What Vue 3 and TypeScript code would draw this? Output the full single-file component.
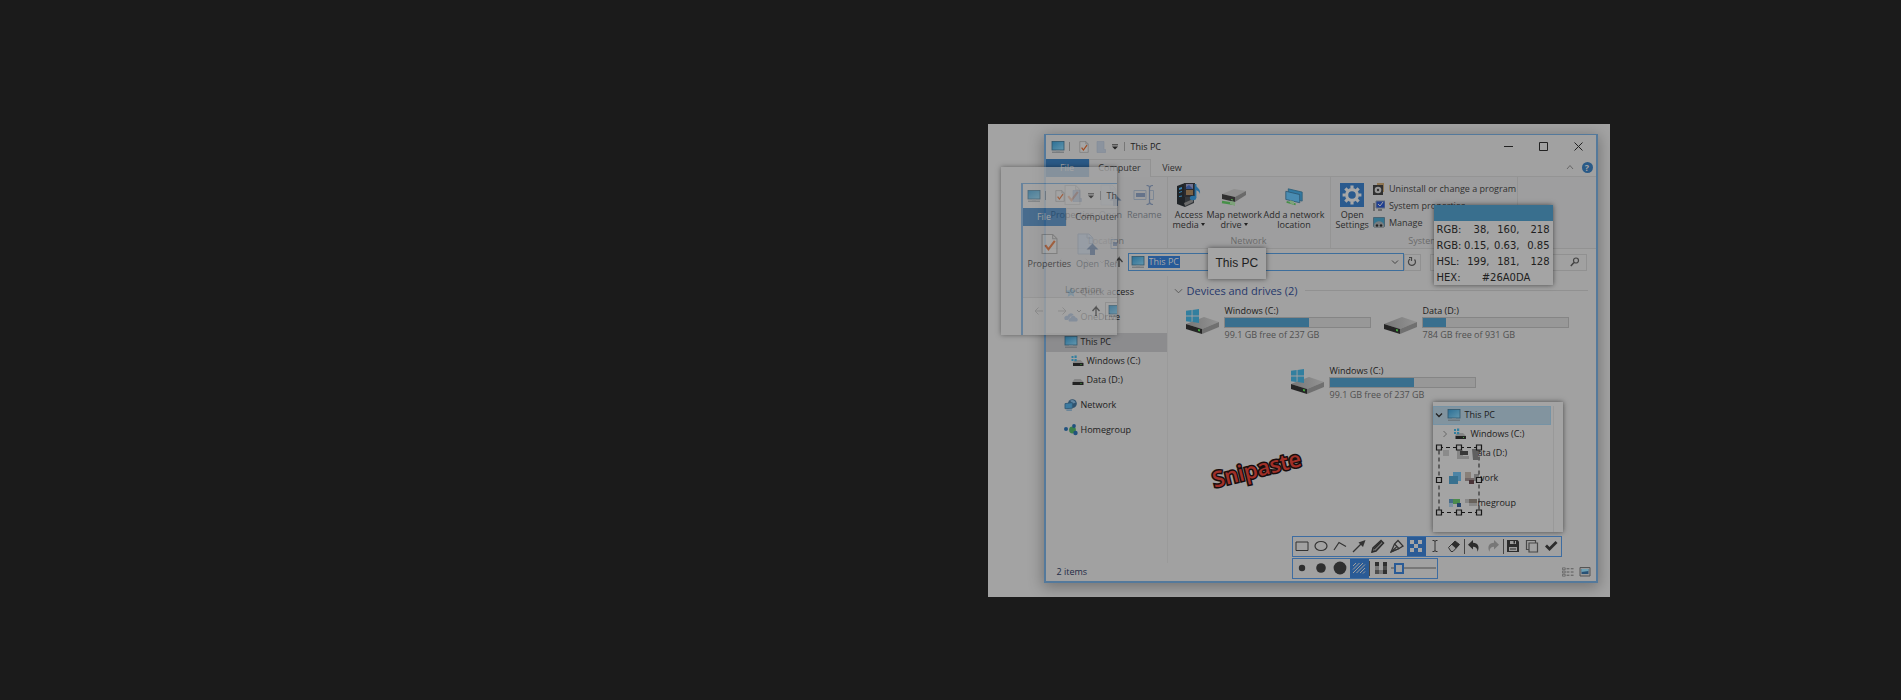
<script setup lang="ts">
import { ref } from 'vue'

interface Drive { name: string; free: string; used: number; icon: string }
interface Tool { label: string; icon: string; active?: boolean; dim?: boolean }

const cDrive: Drive = { name: 'Windows (C:)', free: '99.1 GB free of 237 GB', used: 58, icon: 'i-windrive' }
const drives: Drive[] = [
  cDrive,
  { name: 'Data (D:)', free: '784 GB free of 931 GB', used: 16, icon: 'i-drive' },
]

const places = [
  { name: 'Quick access', icon: 'i-star', gap: true },
  { name: 'OneDrive', icon: 'i-cloud', gap: true },
  { name: 'This PC', icon: 'i-pc', gap: true, current: true },
  { name: 'Windows (C:)', icon: 'i-swin', child: true },
  { name: 'Data (D:)', icon: 'i-sdrive', child: true },
  { name: 'Network', icon: 'i-net', gap: true },
  { name: 'Homegroup', icon: 'i-home', gap: true },
]

const systemTools = [
  { name: 'Uninstall or change a program', icon: 'i-disc' },
  { name: 'System properties', icon: 'i-sys' },
  { name: 'Manage', icon: 'i-manage' },
]

const drawTools: Tool[][] = [
  [
    { label: 'Rectangle', icon: 't-rect' },
    { label: 'Ellipse', icon: 't-ellipse' },
    { label: 'Polyline', icon: 't-poly' },
    { label: 'Arrow', icon: 't-arrow' },
    { label: 'Pencil', icon: 't-pencil' },
    { label: 'Marker', icon: 't-marker' },
    { label: 'Mosaic', icon: 't-mosaic', active: true },
    { label: 'Text', icon: 't-text' },
    { label: 'Eraser', icon: 't-eraser' },
  ],
  [
    { label: 'Undo', icon: 't-undo' },
    { label: 'Redo', icon: 't-redo', dim: true },
  ],
  [
    { label: 'Save', icon: 't-save' },
    { label: 'Copy', icon: 't-copy' },
    { label: 'Done', icon: 't-check' },
  ],
]

const sizeTools: Tool[] = [
  { label: 'Small', icon: 't-dot1' },
  { label: 'Medium', icon: 't-dot2' },
  { label: 'Large', icon: 't-dot3' },
  { label: 'Area', icon: 't-hatch', active: true },
]

const colorRows = [
  ['RGB:', '38,', '160,', '218'],
  ['RGB:', '0.15,', '0.63,', '0.85'],
  ['HSL:', '199,', '181,', '128'],
]

const address = ref('This PC')
const query = ref('')
const strength = ref(12)
</script>

<template>
  <svg class="sheet" aria-hidden="true">
    <defs>
      <linearGradient id="g-screen" x1="0" y1="0" x2="1" y2="1">
        <stop offset="0" stop-color="#2b6f95" /><stop offset="1" stop-color="#6397ae" />
      </linearGradient>
      <linearGradient id="g-top" x1="0" y1="0" x2="1" y2="0">
        <stop offset="0" stop-color="#777" /><stop offset="1" stop-color="#939393" />
      </linearGradient>
    </defs>
    <symbol id="i-pc" viewBox="0 0 14 12">
      <rect x="1" y="0.5" width="12" height="8.5" fill="url(#g-screen)" stroke="#30566b" stroke-width="0.8" />
      <path d="M5 9.4h4v1H5z" fill="#808a90" /><path d="M1 11.2h12" stroke="#62686d" stroke-width="0.9" />
    </symbol>
    <symbol id="i-check" viewBox="0 0 16 20">
      <path d="M1 1h10l4 4v14H1z" fill="#a5a5a5" stroke="#747474" /><path d="M11 1v4h4" fill="none" stroke="#747474" />
      <path d="M4 11l3 4 6-8" fill="none" stroke="#a04a1f" stroke-width="2" />
    </symbol>
    <symbol id="i-doc" viewBox="0 0 10 12"><path d="M1 .5h7v8h1.500v3H1z" fill="#8b939e" stroke="#828a99" stroke-width=".6" /></symbol>
    <symbol id="i-open" viewBox="0 0 22 22">
      <path d="M1 1h11l4 4v16H1z" fill="#959da7" stroke="#858d98" /><path d="M10 1v4h6" fill="none" stroke="#858d98" />
      <path d="M15.500 10.500l-6 6h3.500v5.500h5v-5.500h3.500z" fill="#596a82" />
    </symbol>
    <symbol id="i-rename" viewBox="0 0 22 20">
      <path d="M1 5.500h12v9H1zM16.500 5.500h4v9h-4" fill="none" stroke="#7c8795" /><path d="M3 8h9v4H3z" fill="#65738a" />
      <path d="M13.500.5c2 0 3 .5 3 2v15c0 1.500-1 2-3 2M20 .5c-2 0-3 .5-3 2M20 19.500c-2 0-3-.5-3-2" fill="none" stroke="#65738a" stroke-width="1.200" />
    </symbol>
    <symbol id="i-media" viewBox="0 0 26 24">
      <path d="M1 3l8-3v24l-8-3z" fill="#202428" /><path d="M9 5l9 1v14l-9 4z" fill="#34383c" />
      <path d="M3 5l3-1v2l-3 1zM3 9l3-1v1l-3 1zM3 13l3-.5v1l-3 .5z" fill="#3881b0" />
      <path d="M8 0h11v14H8z" fill="#292b30" /><path d="M10 1h7v5h-7z" fill="#6f7290" /><path d="M10 7h7v5h-7z" fill="#7b6244" />
      <path d="M10 4l3-2 4 4h-7z" fill="#354f87" /><path d="M8 20l9-4v3l-8 4z" fill="#6c6c6c" />
      <path d="M19.500 1v14" stroke="#296f9f" stroke-width="1.800" /><ellipse cx="17" cy="15" rx="3.200" ry="2.200" fill="#296f9f" />
      <path d="M19 1c1 4 6 4 5 10-1-3-3-4-5-4z" fill="#296f9f" />
    </symbol>
    <symbol id="i-mapnet" viewBox="0 0 26 18">
      <path d="M1 6l12-5 12 2-11 6z" fill="#8f8f8f" /><path d="M1 6l13 3v5L1 11z" fill="#303030" /><path d="M14 9l11-6v4l-11 7z" fill="#6a6a6a" />
      <path d="M10 11l2 .5v1l-2-.5z" fill="#52a94a" /><path d="M1 14l13 2" stroke="#479048" stroke-width="2.400" /><path d="M9 13l5 1v4l-5-2z" fill="#7fa37b" />
    </symbol>
    <symbol id="i-addnet" viewBox="0 0 24 22">
      <path d="M5 1l17 4v11L5 12z" fill="#327aa3" stroke="#2f5d74" /><path d="M2 4l17 4v10L2 14z" fill="#4a8cb2" stroke="#2c566f" />
      <path d="M3 17l11 3" stroke="#479048" stroke-width="2.400" /><path d="M7 15l5 1.500v4l-5-2z" fill="#7fa37b" />
    </symbol>
    <symbol id="i-gear" viewBox="0 0 26 26">
      <path d="M0 0h26v26H0z" fill="#2a5a8e" /><circle cx="13" cy="13" r="5.800" fill="none" stroke="#a7a7a7" stroke-width="3.400" />
      <path d="M13 2.800v3.400M13 19.800v3.400M2.800 13h3.400M19.800 13h3.400M5.800 5.800l2.400 2.400M17.800 17.800l2.400 2.400M5.800 20.200l2.400-2.400M17.800 8.200l2.400-2.400" stroke="#a7a7a7" stroke-width="3.400" />
    </symbol>
    <symbol id="i-disc" viewBox="0 0 12 12">
      <path d="M4 0h7v9H4z" fill="#8f7652" /><path d="M0 2h10v10H0z" fill="#303030" /><circle cx="5" cy="7" r="3.300" fill="#989898" /><circle cx="5" cy="7" r="1.200" fill="#333" />
    </symbol>
    <symbol id="i-sys" viewBox="0 0 12 12">
      <path d="M3 1h9v7H3z" fill="#203f91" stroke="#656f7d" /><path d="M5 4l2 2 3-4" fill="none" stroke="#a5a5a5" /><path d="M0 3h2v8H0zM5 9h4v2H5z" fill="#6b6b6b" />
    </symbol>
    <symbol id="i-manage" viewBox="0 0 12 12">
      <path d="M.5.5h11v9H.5z" fill="#347590" stroke="#4a6473" /><path d="M1 8c1-5 9-5 10 0v3H1z" fill="#777c7e" /><circle cx="4" cy="8.500" r="1.200" fill="#222" /><circle cx="8" cy="8.500" r="1.200" fill="#222" />
    </symbol>
    <symbol id="i-drive" viewBox="0 0 33 26">
      <path d="M0 15l18-7 15 5-17 7z" fill="url(#g-top)" /><path d="M16 20l17-7v5l-17 7z" fill="#707070" /><path d="M0 15l16 5v5L0 20z" fill="#252525" /><path d="M12 20l2 .6v2l-2-.6z" fill="#43a43d" />
    </symbol>
    <symbol id="i-windrive" viewBox="0 0 33 26">
      <path d="M0 15l18-7 15 5-17 7z" fill="url(#g-top)" /><path d="M16 20l17-7v5l-17 7z" fill="#707070" /><path d="M0 15l16 5v5L0 20z" fill="#252525" /><path d="M12 20l2 .6v2l-2-.6z" fill="#43a43d" />
      <path d="M0 1.800L5.600 1v5.600H0zM6.500.9L13 0v6.600H6.500zM0 7.500h5.600V13L0 12.200zM6.500 7.500H13V14l-6.500-.9z" fill="#327f9f" />
    </symbol>
    <symbol id="i-sdrive" viewBox="0 0 12 12"><path d="M3 5h6l3 3H1z" fill="#858585" /><path d="M1 8h11v3H1z" fill="#222" /><path d="M9 9h1v1H9z" fill="#45a641" /></symbol>
    <symbol id="i-swin" viewBox="0 0 12 12">
      <path d="M3 5h6l3 3H1z" fill="#858585" /><path d="M1.500 8H12v3H1.500z" fill="#222" /><path d="M9 9h1v1H9z" fill="#45a641" /><path d="M0 1h2v2H0zM3 .5h2.200V3H3zM0 4h2v2H0zM3 4h2.200v2.200H3z" fill="#327f9f" />
    </symbol>
    <symbol id="i-star" viewBox="0 0 12 12"><path d="M6 1l1.600 3.300 3.600.4-2.700 2.500.8 3.600L6 9l-3.300 1.800.8-3.600L.8 4.700l3.600-.4z" fill="#28729f" /></symbol>
    <symbol id="i-cloud" viewBox="0 0 14 12"><path d="M1 9c-2-3 1-5 2.500-4C5 1 9 2 9.500 4l-3 1.500L4 9z" fill="#264d83" /><path d="M5 10.500c-1-2 0-3.500 1.500-3.500C7 4 11 4 11.500 6.500 14 6.500 14.500 10 12.500 10.500z" fill="#264d83" /></symbol>
    <symbol id="i-net" viewBox="0 0 14 13"><circle cx="8.500" cy="5" r="4.800" fill="#30536f" /><path d="M6 2c2-2 5-1 6 2l-3 1z" fill="#6185a0" /><path d="M.5 5l8-1v6l-8 .5z" fill="#3d7ba0" stroke="#325c7a" /><path d="M2 12h6" stroke="#386d92" /></symbol>
    <symbol id="i-home" viewBox="0 0 14 12"><circle cx="8.500" cy="6" r="3.400" fill="#3a7f49" /><circle cx="2" cy="5" r="2" fill="#20517f" /><circle cx="10" cy="2" r="1.900" fill="#20517f" /><circle cx="11.500" cy="9" r="2.200" fill="#20517f" /></symbol>

    <symbol id="t-rect" viewBox="0 0 14 14"><path d="M1 3h12v8.500H1z" fill="none" stroke="#333" /></symbol>
    <symbol id="t-ellipse" viewBox="0 0 14 14"><ellipse cx="7" cy="7" rx="6" ry="4.500" fill="none" stroke="#333" stroke-width="1.200" /></symbol>
    <symbol id="t-poly" viewBox="0 0 14 14"><path d="M1 11l5-7.500 7 4" fill="none" stroke="#333" stroke-width="1.200" /></symbol>
    <symbol id="t-arrow" viewBox="0 0 14 14"><path d="M1 13L9 5" stroke="#333" stroke-width="1.300" /><path d="M13.500 1L11 8 6.500 3.500z" fill="#333" /></symbol>
    <symbol id="t-pencil" viewBox="0 0 14 14"><path d="M1 13l1-4L10 1.500l2.500 2.500L5 12z" fill="#777" stroke="#2c2c2c" stroke-width="1.500" /><path d="M3 10l7-7M1 13l3-1" stroke="#2c2c2c" stroke-width="1.300" /></symbol>
    <symbol id="t-marker" viewBox="0 0 14 14"><path d="M1 13L4.500 5 8 1.500l5 5.500-4 2.500z" fill="none" stroke="#333" stroke-width="1.300" /><path d="M4.500 5L9 9.500 1 13l5.500-5" fill="none" stroke="#333" stroke-width="1.200" /></symbol>
    <symbol id="t-mosaic" viewBox="0 0 14 14"><path d="M1 1h4v4H1zM9 1h4v4H9zM5 5h4v4H5zM1 9h4v4H1zM9 9h4v4H9z" fill="#a5a5a5" /></symbol>
    <symbol id="t-text" viewBox="0 0 14 14"><path d="M4.500 1.500H6l1 .8 1-.8h1.500M7 2v10M4.500 12.500H6l1-.8 1 .8h1.500" fill="none" stroke="#333" /></symbol>
    <symbol id="t-eraser" viewBox="0 0 14 14"><path d="M1.500 8.500L8 2l4.500 3.500-6.500 7H4z" fill="#9b9b9b" stroke="#333" /><path d="M8 2l4.500 3.500-3.500 4L4.500 5.500z" fill="#2c2c2c" /></symbol>
    <symbol id="t-undo" viewBox="0 0 14 14"><path d="M6 1v2.700c5 0 7 4 4.500 9 0-3.500-1.500-5-4.500-5v2.800L1 5.700z" fill="#2c2c2c" /></symbol>
    <symbol id="t-redo" viewBox="0 0 14 14"><path d="M8 1v2.700c-5 0-7 4-4.500 9 0-3.500 1.500-5 4.500-5v2.800l5-4.800z" fill="#777" /></symbol>
    <symbol id="t-save" viewBox="0 0 14 14"><path d="M1 1h10.500L13 2.500V13H1z" fill="#2c2c2c" /><path d="M4 2h6v3H4zM3 8h8v4H3z" fill="#9d9d9d" /><path d="M7.500 2H9v2.500H7.500zM4 9.500h6v1H4z" fill="#2c2c2c" /></symbol>
    <symbol id="t-copy" viewBox="0 0 14 14"><path d="M4 4h8.500v9H4zM10.500 4V1.500h-9v9H4" fill="none" stroke="#484848" stroke-width="1.200" /></symbol>
    <symbol id="t-check" viewBox="0 0 14 14"><path d="M1 7.500l2-2L5.500 8 11.500 2l2 2-8 8z" fill="#2c2c2c" /></symbol>
    <symbol id="t-dot1" viewBox="0 0 14 14"><circle cx="7" cy="7" r="3.200" fill="#2f2f2f" /></symbol>
    <symbol id="t-dot2" viewBox="0 0 14 14"><circle cx="7" cy="7" r="4.800" fill="#2f2f2f" /></symbol>
    <symbol id="t-dot3" viewBox="0 0 14 14"><circle cx="7" cy="7" r="6.400" fill="#2f2f2f" /></symbol>
    <symbol id="t-hatch" viewBox="0 0 14 14"><path d="M1 5l3-3M1 8.500L7.500 2M1 12L11 2M4.500 12L13 3.500M8 12l5-5M11 12.500l2-2" stroke="#a0a0a0" /></symbol>
    <symbol id="t-blocks" viewBox="0 0 12 12"><path d="M0 0h4v4H0zM8 0h4v4H8zM8 8h4v4H8z" fill="#303030" /><path d="M0 4h4v4H0zM4 8h4v4H4z" fill="#777" /><path d="M8 4h4v4H8zM0 8h4v4H0z" fill="#4d4d4d" /></symbol>
  </svg>

  <main class="page">
    <section class="hero">
      <div class="stage">
        <div class="window">
          <header class="title">
            <svg class="ic pc"><use href="#i-pc" /></svg><i class="tick"></i>
            <svg class="ic chk"><use href="#i-check" /></svg>
            <svg class="ic doc"><use href="#i-doc" /></svg>
            <svg class="ic qat" viewBox="0 0 6 6"><path d="M0 .8h6" stroke="#333" /><path d="M0 2.500h6L3 5.500z" fill="#222" /></svg>
            <i class="tick"></i><span class="name">This PC</span>
            <div class="caption">
              <button aria-label="Minimize"><svg viewBox="0 0 9 9"><path d="M0 4.500h9" /></svg></button>
              <button aria-label="Maximize"><svg viewBox="0 0 9 9"><path d="M.5.5h8v8h-8z" /></svg></button>
              <button aria-label="Close"><svg viewBox="0 0 9 9"><path d="M.5.5l8 8M8.500.5l-8 8" /></svg></button>
            </div>
          </header>

          <nav class="tabs">
            <button class="file">File</button><button class="on">Computer</button><button>View</button>
            <span class="help">
              <svg class="fold" viewBox="0 0 8 6"><path d="M1 5l3-3.500L7 5" fill="none" stroke="#666" /></svg>
              <button class="q" aria-label="Help">?</button>
            </span>
          </nav>

          <div class="ribbon">
            <div class="group loc">
              <div class="tools">
                <button class="tool"><svg class="big k"><use href="#i-check" /></svg><span>Properties</span></button>
                <button class="tool off op"><svg class="big"><use href="#i-open" /></svg><span>Open</span></button>
                <button class="tool off"><svg class="big"><use href="#i-rename" /></svg><span>Rename</span></button>
              </div>
              <p>Location</p>
            </div>
            <div class="group net">
              <div class="tools">
                <button class="tool"><svg class="big"><use href="#i-media" /></svg><span>Access<br />media <b class="dn"></b></span></button>
                <button class="tool"><svg class="big m"><use href="#i-mapnet" /></svg><span>Map network<br />drive <b class="dn"></b></span></button>
                <button class="tool"><svg class="big m"><use href="#i-addnet" /></svg><span>Add a network<br />location</span></button>
              </div>
              <p>Network</p>
            </div>
            <div class="group sys">
              <div class="tools">
                <button class="tool set"><svg class="big"><use href="#i-gear" /></svg><span>Open<br />Settings</span></button>
                <div class="list">
                  <button v-for="s in systemTools" :key="s.name"><svg><use :href="'#' + s.icon" /></svg>{{ s.name }}</button>
                </div>
              </div>
              <p>System</p>
            </div>
          </div>

          <div class="bar">
            <div class="arrows">
              <svg viewBox="0 0 66 12"><path d="M9 6H1l3.500-3.500M1 6l3.500 3.500M24 6h8l-3.500-3.500M32 6l-3.500 3.500" stroke="#858585" /><path d="M43 5l2 2 2-2" stroke="#777" /><path d="M62 11V2l-3.500 4M62 2l3.500 4" stroke="#3b3b3b" stroke-width="1.300" /></svg>
            </div>
            <label class="addr"><svg class="ic pc"><use href="#i-pc" /></svg><input v-model="address" aria-label="Address" />
              <svg class="drop" viewBox="0 0 8 6"><path d="M1 1.500l3 3 3-3" fill="none" stroke="#444" /></svg></label>
            <button class="reload" aria-label="Refresh"><svg viewBox="0 0 10 10"><path d="M7.500 2.500A3.500 3.500 0 1 1 3 2M2 .5h2.500V4" fill="none" stroke="#444" stroke-width="1.200" /></svg></button>
            <label class="find"><input v-model="query" aria-label="Search This PC" /><svg viewBox="0 0 10 10"><circle cx="6" cy="3.500" r="2.500" fill="none" stroke="#444" stroke-width="1.200" /><path d="M4 5.500L.8 9" stroke="#444" stroke-width="1.500" /></svg></label>
          </div>

          <div class="body">
            <aside class="side">
              <a v-for="p in places" :key="p.name" href="#" :class="{ gap: p.gap, child: p.child, current: p.current }">
                <svg><use :href="'#' + p.icon" /></svg>{{ p.name }}
              </a>
            </aside>
            <div class="pane">
              <h2><svg viewBox="0 0 10 6"><path d="M1 1l4 4 4-4" fill="none" stroke="#555" /></svg>Devices and drives (2)</h2>
              <div class="drives">
                <div v-for="d in drives" :key="d.name" class="drive">
                  <svg><use :href="'#' + d.icon" /></svg>
                  <div class="info"><span>{{ d.name }}</span><div class="meter"><i :style="{ width: d.used + '%' }"></i></div><small>{{ d.free }}</small></div>
                </div>
              </div>
            </div>
          </div>

          <footer class="status">2 items
            <span class="views">
              <svg viewBox="0 0 13 10"><path d="M.5.5h3v2h-3zM.5 4h3v2h-3zM.5 7.500h3v2h-3z" fill="none" stroke="#555" stroke-width=".7" /><path d="M5 1.500h3M9.500 1.500h3M5 5h3M9.500 5h3M5 8.500h3M9.500 8.500h3" stroke="#555" /></svg>
              <svg viewBox="0 0 11 10"><path d="M.5.5h10v8.500H.5z" fill="#999" stroke="#555" /><path d="M2 2h7v5H2z" fill="#285276" /><path d="M2 2h7v2L2 5z" fill="#6da0b3" /></svg>
            </span>
          </footer>
        </div>

        <div class="drive copy">
          <svg><use :href="'#' + cDrive.icon" /></svg>
          <div class="info"><span>{{ cDrive.name }}</span><div class="meter"><i :style="{ width: cDrive.used + '%' }"></i></div><small>{{ cDrive.free }}</small></div>
        </div>

        <div class="snip ghost">
          <div class="part">
            <div class="title">
              <svg class="ic pc"><use href="#i-pc" /></svg><i class="tick"></i>
              <svg class="ic chk"><use href="#i-check" /></svg>
              <svg class="ic doc"><use href="#i-doc" /></svg>
              <svg class="ic qat" viewBox="0 0 6 6"><path d="M0 .8h6" stroke="#333" /><path d="M0 2.500h6L3 5.500z" fill="#222" /></svg>
              <i class="tick"></i><span class="name">This PC</span>
            </div>
            <div class="tabs"><button class="file">File</button><button class="on">Computer</button></div>
            <div class="ribbon">
              <div class="group loc">
                <div class="tools">
                  <button class="tool"><svg class="big k"><use href="#i-check" /></svg><span>Properties</span></button>
                  <button class="tool off op"><svg class="big"><use href="#i-open" /></svg><span>Open</span></button>
                  <button class="tool off"><svg class="big"><use href="#i-rename" /></svg><span>Rename</span></button>
                </div>
                <p>Location</p>
              </div>
            </div>
            <div class="bar">
              <div class="arrows">
                <svg viewBox="0 0 66 12"><path d="M9 6H1l3.500-3.500M1 6l3.500 3.500M24 6h8l-3.500-3.500M32 6l-3.500 3.500" stroke="#858585" /><path d="M43 5l2 2 2-2" stroke="#777" /><path d="M62 11V2l-3.500 4M62 2l3.500 4" stroke="#3b3b3b" stroke-width="1.300" /></svg>
              </div>
              <div class="addr plain"><svg class="ic pc"><use href="#i-pc" /></svg></div>
            </div>
          </div>
        </div>

        <div class="snip tip">This PC</div>

        <div class="snip color">
          <div class="swatch"></div>
          <table>
            <tbody>
              <tr v-for="(r, i) in colorRows" :key="i"><th scope="row">{{ r[0] }}</th><td>{{ r[1] }}</td><td>{{ r[2] }}</td><td>{{ r[3] }}</td></tr>
              <tr><th scope="row">HEX:</th><td colspan="3" class="hex">#26A0DA</td></tr>
            </tbody>
          </table>
        </div>

        <div class="snip tree">
          <div class="inner">
            <a href="#" class="sel"><svg class="ar" viewBox="0 0 8 8"><path d="M1 2.500l3 3 3-3" stroke="#222" stroke-width="1.300" /></svg><svg><use href="#i-pc" /></svg>This PC</a>
            <a href="#" class="child"><svg class="ar" viewBox="0 0 8 8"><path d="M2.500 1l3 3-3 3" stroke="#666" /></svg><svg><use href="#i-swin" /></svg>Windows (C:)</a>
            <a href="#" class="cut">ata (D:)</a>
            <a href="#" class="cut gap">work</a>
            <a href="#" class="cut gap">megroup</a>
          </div>
          <svg class="marquee" viewBox="0 0 48 72">
            <path d="M8 6h6v6H8z" fill="#8b8b8b" /><path d="M22 6h6v6h-6zM28 12h6v3h-12v-3z" fill="#858585" /><path d="M25 7h8v4h-8z" fill="#383838" /><path d="M37 5h6v11h-5z" fill="#606060" />
            <path d="M18 28h8v9h-8z" fill="#4d84a5" /><path d="M14 32h9v8h-9z" fill="#39718f" /><path d="M30 28h6v6h-6z" fill="#888079" /><path d="M30 34h12v3H30z" fill="#706666" /><path d="M34 36h5v4h-5z" fill="#493337" /><path d="M39 30h5v7h-5z" fill="#777" />
            <path d="M14 55h4v4h-4z" fill="#466b88" /><path d="M18 55h7v5h-7z" fill="#4c8b4d" /><path d="M22 59h4v4h-4z" fill="#25436b" /><path d="M14 59h4v4h-4z" fill="#7b92a4" /><path d="M30 55h6v4h-6zM34 59h8v3h-8z" fill="#888" /><path d="M34 55h8v4h-8z" fill="#68625c" />
            <path d="M4 3.500h40v65H4z" fill="none" stroke="#181818" stroke-dasharray="4 3" />
            <path d="M1.500 1h5v5h-5zM21.500 1h5v5h-5zM41.500 1h5v5h-5zM1.500 33.500h5v5h-5zM41.500 33.500h5v5h-5zM1.500 66h5v5h-5zM21.500 66h5v5h-5zM41.500 66h5v5h-5z" fill="#a0a0a0" stroke="#181818" stroke-width="1.200" />
          </svg>
        </div>

        <div class="toolbar main">
          <div v-for="(g, i) in drawTools" :key="i" class="set">
            <button v-for="t in g" :key="t.label" :aria-label="t.label" :class="{ active: t.active }" :disabled="t.dim"><svg><use :href="'#' + t.icon" /></svg></button>
          </div>
        </div>
        <div class="toolbar sub">
          <div class="set">
            <button v-for="t in sizeTools" :key="t.label" :aria-label="t.label" :class="{ active: t.active }"><svg><use :href="'#' + t.icon" /></svg></button>
          </div>
          <div class="set"><svg class="blocks"><use href="#t-blocks" /></svg><input v-model="strength" type="range" aria-label="Mosaic strength" /></div>
        </div>

        <div class="brand">Snipaste</div>
      </div>
    </section>
  </main>
</template>

<style>
body { margin: 0; background: #1b1b1b; }
</style>

<style scoped>
* { box-sizing: border-box; }
button, input { font: inherit; color: inherit; background: none; border: 0; padding: 0; margin: 0; }
a { color: inherit; text-decoration: none; }
svg { display: block; flex: none; }
.sheet { position: absolute; width: 0; height: 0; }
.page { min-height: 100vh; padding-top: 20px; display: grid; align-items: center; color: #202020; font: 9px/10px "Open Sans", "Noto Sans", sans-serif; }
.hero { width: 100%; max-width: 1318px; margin: 0 auto; display: flex; justify-content: flex-end; }
.stage { position: relative; width: 100%; max-width: 622px; padding: 10px 12px 14px 56px; background: #a3a3a3; overflow: hidden; }
.window { display: flex; flex-direction: column; background: #a1a1a1; border: 2px solid #54799b; border-top-width: 1px; box-shadow: 0 3px 14px 1px rgba(0, 0, 0, .3); }

.title { display: flex; align-items: center; height: 24px; padding-left: 5px; white-space: nowrap; }
.ic { width: 14px; height: 12px; }
.tick { width: 1px; height: 9px; background: #777; margin: 0 9px 0 4px; }
.chk { width: 10px; height: 12px; margin-right: 7px; }
.doc { width: 10px; height: 12px; margin-right: 6px; }
.qat { width: 6px; height: 6px; margin-right: 2px; }
.qat + .tick { margin-right: 6px; }
.caption { margin-left: auto; display: flex; }
.caption button { width: 35px; height: 22px; display: grid; place-items: center; }
.caption svg { width: 9px; height: 9px; fill: none; stroke: #222; }

.tabs { display: flex; height: 18px; border-bottom: 1px solid #949494; }
.tabs button { width: 43px; height: 18px; color: #303030; }
.tabs .file { width: 43px; background: #2a5a87; color: #a5a5a5; }
.tabs .on { width: 62px; background: #9f9fa0; border: 1px solid #929292; border-width: 1px 1px 0; }
.help { margin-left: auto; display: flex; align-items: center; gap: 8px; padding-right: 3px; }
.fold { width: 8px; height: 6px; }
.tabs .q { width: 11px; height: 11px; border-radius: 50%; background: #2a5a87; color: #a5a5a5; font-weight: 700; line-height: 11px; }

.ribbon { display: flex; height: 72px; background: #9e9e9f; border-bottom: 1px solid #929292; }
.group { display: flex; flex-direction: column; justify-content: space-between; padding: 6px 5px 2px; border-right: 1px solid #949494; white-space: nowrap; }
.group p { margin: 0; text-align: center; color: #6a6a6a; }
.tools { display: flex; justify-content: space-between; }
.tool { display: flex; flex-direction: column; align-items: center; gap: 3px; line-height: 10px; color: #2b2b2b; }
.tool.off { color: #62676d; }
.big { width: 26px; height: 24px; }
.big.k { width: 17px; }
.op .big { width: 22px; }
.big.m { height: 18px; margin: 5px 0 1px; }
.off:last-child .big { width: 22px; height: 20px; margin: 2px 0; }
.loc { width: 122px; }
.net { width: 163px; }
.sys { width: 187px; }
.dn { display: inline-block; border: 2px solid transparent; border-top: 3px solid #222; border-bottom: 0; vertical-align: 2px; }
.sys .tools { justify-content: flex-start; gap: 4px; }
.list { display: flex; flex-direction: column; gap: 5px; }
.list button { display: flex; align-items: center; gap: 4px; height: 12px; color: #303030; }
.list svg { width: 12px; height: 12px; }

.bar { display: flex; align-items: center; height: 27px; padding: 0 9px 0 11px; }
.arrows { width: 71px; }
.arrows svg { width: 66px; height: 12px; fill: none; }
.addr { display: flex; align-items: center; flex: 1; height: 18px; padding: 0 4px 0 2px; gap: 3px; border: 1px solid #3d6e9c; }
.addr input { field-sizing: content; background: #285b98; color: #a9a9a9; line-height: 12px; height: 12px; padding: 0 1px; }
.addr .drop { width: 8px; height: 6px; margin-left: auto; }
.reload { width: 17px; height: 17px; display: grid; place-items: center; border: 1px solid #919191; }
.reload svg { width: 10px; height: 10px; }
.find { display: flex; align-items: center; width: 157px; height: 17px; margin-left: 9px; padding-right: 6px; border: 1px solid #919191; }
.find input { flex: 1; min-width: 0; }
.find svg { width: 10px; height: 10px; }

.body { display: flex; min-height: 287px; }
.side { width: 122px; padding-top: 1px; border-right: 1px solid #9a9a9a; }
.side a { display: flex; align-items: center; gap: 3px; height: 19px; padding-left: 18px; }
.side a.gap { margin-top: 6px; }
.side a.child { padding-left: 25px; }
.side svg { width: 14px; height: 12px; }
.side .child svg { width: 13px; }
.side .current { background: #8c8c8e; }
.pane { flex: 1; padding: 8px 0 0 6px; }
.pane h2 { display: flex; align-items: center; gap: 4px; margin: 0; padding-right: 8px; font-size: 11px; line-height: 14px; font-weight: 400; color: #26386b; }
.pane h2 svg { width: 9px; height: 6px; }
.pane h2::after { content: ""; flex: 1; height: 1px; margin-left: 4px; background: #919191; }
.drives { display: grid; grid-template-columns: 1fr 1fr; padding: 6px 14px 0 12px; }
.drive { display: flex; align-items: center; gap: 5px; white-space: nowrap; }
.drive > svg { width: 33px; height: 26px; }
.info { width: 147px; }
.info span { display: block; padding-left: 1px; line-height: 13px; }
.meter { height: 11px; border: 1px solid #858585; background: #989898; }
.meter i { display: block; height: 9px; background: #396f8e; }
.info small { display: block; padding-left: 1px; font-size: 9px; line-height: 13px; color: #505050; }

.status { display: flex; align-items: center; height: 18px; padding: 0 5px 0 11px; color: #1f2b45; }
.views { display: flex; gap: 5px; margin-left: auto; }
.views svg { width: 12px; height: 10px; }

.snip { position: absolute; background: #a4a4a4; box-shadow: 0 0 5px rgba(0, 0, 0, .55); overflow: hidden; }
.copy { position: absolute; left: 303px; top: 240px; }
.ghost { left: 13px; top: 43px; width: 116px; height: 168px; opacity: .75; }
.part { width: 250px; height: 200px; margin: 16px 0 0 20px; border: 2px solid #54799b; border-top-width: 1px; }
.ghost .title { padding-left: 4px; }
.addr.plain { border-color: #8c8c8c; }
.tip { left: 220px; top: 124px; padding: 0 8px; font: 12px/31px "Liberation Sans", Arial, sans-serif; }
.color { left: 446px; top: 81px; width: 119px; }
.swatch { height: 16px; background: #396f8e; }
.color table { width: 100%; border-collapse: collapse; font: 10px/15px "DejaVu Sans", Verdana, sans-serif; table-layout: fixed; }
.color th, .color td { padding: 1px 3px 0 0; height: 16px; line-height: 15px; text-align: right; font-weight: 400; }
.color th { padding-left: 3px; padding-right: 0; width: 29px; text-align: left; }
.color td.hex { text-align: center; }
.tree { left: 445px; top: 278px; width: 130px; height: 130px; padding-top: 4px; }
.inner { width: 121px; height: 126px; border-right: 1px solid #999; }
.tree a { display: flex; align-items: center; gap: 3px; height: 19px; }
.tree a svg { width: 14px; height: 12px; }
.tree a .ar { width: 8px; height: 8px; fill: none; }
.tree .sel { width: 118px; padding-left: 1px; gap: 4px; background: #82949f; border: 1px solid #7693a5; }
.tree .child { padding-left: 8px; gap: 4px; }
.tree .cut { padding-left: 45px; }
.tree .gap { margin-top: 6px; }
.marquee { position: absolute; left: 2px; top: 42px; width: 48px; height: 72px; }

.toolbar { position: absolute; left: 304px; display: flex; height: 21px; background: #a1a1a1; border: 1px solid #3d6ca1; }
.toolbar.main { top: 412px; }
.toolbar.sub { top: 434px; }
.toolbar .set { display: flex; align-items: center; }
.toolbar .set + .set::before { content: ""; width: 1px; height: 15px; background: #444; }
.toolbar button { width: 19px; height: 19px; display: grid; place-items: center; }
.toolbar svg { width: 14px; height: 14px; }
.toolbar .active { background: #2a5b96; }
.toolbar .blocks { width: 12px; height: 12px; margin: 0 4px 0 5px; }
.toolbar input { appearance: none; width: 45px; height: 13px; background: linear-gradient(#777, #777) center / 100% 2px no-repeat; margin-right: 1px; }
.toolbar input::-webkit-slider-thumb { appearance: none; width: 8px; height: 9px; background: #a1a1a1; border: 1px solid #2a5b96; outline: 1px solid #2a5b96; }

.brand { position: absolute; left: 223px; top: 329px; font-size: 22px; line-height: 30px; font-weight: 600; color: #a03028; transform: rotate(-14deg); -webkit-text-stroke: 3px #180d0d; paint-order: stroke fill; }
</style>
